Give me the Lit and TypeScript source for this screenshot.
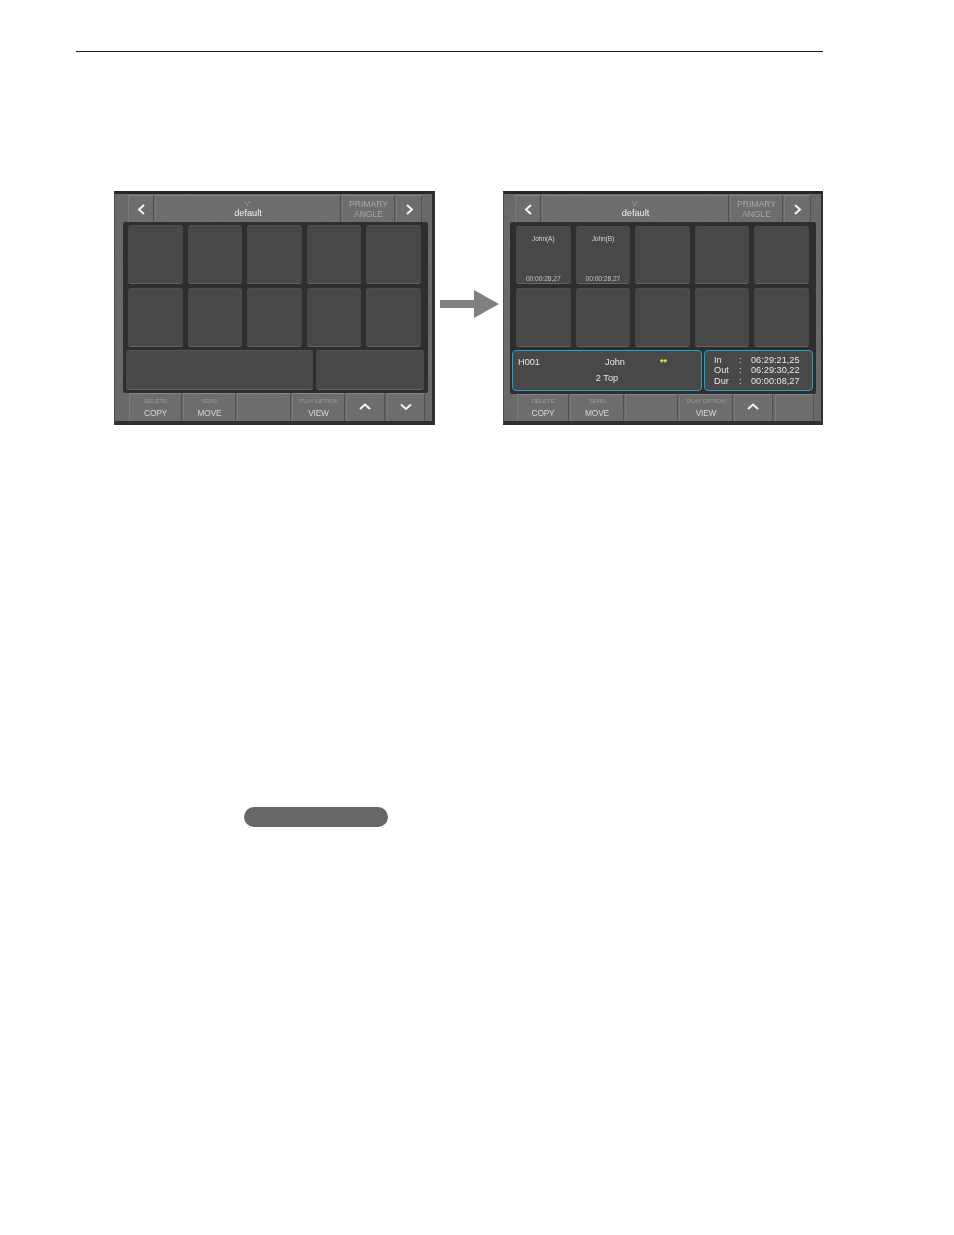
import { LitElement, html, css, svg, unsafeCSS } from "lit";
import { customElement, property } from "lit/decorators.js";

const NOISE = `url("data:image/svg+xml,%3Csvg xmlns='http://www.w3.org/2000/svg' width='160' height='160'%3E%3Cfilter id='n'%3E%3CfeTurbulence type='fractalNoise' baseFrequency='.8' numOctaves='2' stitchTiles='stitch'/%3E%3CfeColorMatrix values='0 0 0 0 .55 0 0 0 0 .55 0 0 0 0 .55 0 0 0 1.2 -.45'/%3E%3C/filter%3E%3Crect width='160' height='160' filter='url(%23n)' opacity='.22'/%3E%3C/svg%3E")`;

const chevron = (dir: "left" | "right" | "up" | "down") => {
  const pts = {
    left: "7,1 2,5.5 7,10",
    right: "2,1 7,5.5 2,10",
    up: "1,6 6,1.5 11,6",
    down: "1,1.5 6,6 11,1.5",
  }[dir];
  const horiz = dir === "left" || dir === "right";
  return html`<svg class="chev" width=${horiz ? 9 : 12} height=${horiz ? 11 : 8} viewBox=${horiz ? "0 0 9 11" : "0 0 12 8"}>
    ${svg`<polyline points=${pts} fill="none" stroke="#f4f4f4" stroke-width="2"/>`}
  </svg>`;
};

@customElement("switcher-panel")
class SwitcherPanel extends LitElement {
  @property({ type: Boolean, reflect: true }) filled = false;

  static styles = css`
    :host {
      display: block;
      width: 321px;
      height: 234px;
      box-sizing: border-box;
      border-top: 3px solid #262626;
      border-left: 1px solid #4a4c52;
      border-right: 3px solid #303030;
      border-bottom: 4px solid #303030;
      background-color: #666;
      background-image: ${unsafeCSS(NOISE)};
      font-family: "Liberation Sans", Arial, sans-serif;
    }
    :host([filled]) {
      width: 320px;
      border-right-width: 2px;
    }
    .top {
      display: grid;
      grid-template-columns: 26px 186px 53px 26px;
      column-gap: 1px;
      height: 27px;
      margin-top: 1px;
      padding-left: 13px;
    }
    .filled .top {
      grid-template-columns: 26px 187px 53px 27px;
      padding-left: 11px;
    }
    .btn {
      display: flex;
      flex-direction: column;
      align-items: center;
      justify-content: center;
      box-sizing: border-box;
      background: rgba(112, 112, 112, 0.6);
      border-top: 1px solid #878787;
      border-left: 1px solid #7a7a7a;
      border-right: 1px solid #505050;
      text-align: center;
      filter: blur(0.25px);
    }
    .v { font-size: 7.5px; line-height: 8px; color: #9a9a9a; }
    .def { font-size: 9.2px; line-height: 10px; color: #f0f0f0; }
    .prim { font-size: 8.6px; line-height: 10.5px; color: #a8a8a8; }
    .inner {
      display: flex;
      flex-direction: column;
      box-sizing: border-box;
      width: 305px;
      height: 171px;
      margin-left: 8px;
      padding-top: 3px;
      background: #2e2e2e;
      border-radius: 2px;
    }
    .filled .inner {
      width: 306px;
      height: 172px;
      margin-left: 6px;
      padding-top: 4px;
    }
    .grid {
      display: grid;
      grid-template-columns: repeat(5, 1fr);
      grid-template-rows: 59px 59px;
      gap: 4px 5px;
      width: 293px;
      margin-left: 5px;
    }
    .filled .grid {
      grid-template-rows: 58px 59px;
      margin-left: 6px;
    }
    .tile {
      display: flex;
      flex-direction: column;
      justify-content: space-between;
      align-items: center;
      box-sizing: border-box;
      padding: 8px 0 0;
      background: #484848;
      border-radius: 3px;
      border-top: 1px solid #4e4e4e;
      border-bottom: 1px solid #636363;
      color: #d4d4d4;
      font-size: 6.4px;
      line-height: 8px;
      filter: blur(0.2px);
    }
    .tile-name { font-size: 6.6px; letter-spacing: -0.1px; }
    .tile-time { font-size: 6.8px; color: #c0c0c0; letter-spacing: -0.1px; }
    .wide {
      display: grid;
      grid-template-columns: 187px 108px;
      column-gap: 3px;
      height: 40px;
      margin: 3px 0 0 3px;
    }
    .filled .wide {
      grid-template-columns: 190px 109px;
      column-gap: 2px;
      height: 41px;
      margin-left: 2px;
    }
    .box {
      box-sizing: border-box;
      background: #484848;
      border-radius: 3px;
      border-top: 1px solid #555;
      border-bottom: 1px solid #636363;
    }
    .filled .box {
      border: 1.5px solid #1ea5d6;
      border-radius: 4px;
      color: #e6e6e6;
      font-size: 9.2px;
      filter: blur(0.2px);
    }
    .clip {
      display: grid;
      grid-template-columns: 77px 40px 1fr;
      grid-template-rows: 16px 16px;
      padding: 3px 0 0 5px;
      line-height: 16px;
    }
    .clip .mid { text-align: center; }
    .clip .stars {
      padding-left: 25px;
      color: #f5f02a;
      font-size: 9px;
      font-weight: bold;
    }
    .clip .sub { grid-column: 1 / -1; text-align: center; padding-right: 5px; }
    .tc {
      display: grid;
      grid-template-columns: 25px 12px 1fr;
      grid-auto-rows: 10.4px;
      padding: 4px 0 0 9px;
      line-height: 10.4px;
    }
    .bottom {
      display: grid;
      grid-template-columns: 53px 53px 54px 53px 39px 39px;
      column-gap: 1px;
      height: 28px;
      padding-left: 14px;
    }
    .filled .bottom {
      grid-template-columns: 52px 54px 53px 54px 39px 40px;
      height: 27px;
      padding-left: 13px;
    }
    .bottom .btn:nth-child(6) { margin-left: 1px; }
    .cap { font-size: 6px; line-height: 7px; color: #9a9a9a; letter-spacing: -0.1px; margin-bottom: 4px; }
    .lab { font-size: 8.4px; line-height: 9px; color: #d6d6d6; letter-spacing: -0.2px; }
    .chev { display: block; }
    .bottom .chev { margin: -2px 1px 0 0; }
  `;

  private bottomBtn(cap: string, lab: string) {
    return html`<div class="btn">
      ${cap || lab ? html`<div class="cap">${cap}</div><div class="lab">${lab}</div>` : ""}
    </div>`;
  }

  render() {
    const f = this.filled;
    const tiles = Array.from({ length: 10 }, (_, i) => {
      if (f && i < 2) {
        return html`<div class="tile">
          <div class="tile-name">John(${i === 0 ? "A" : "B"})</div>
          <div class="tile-time">00:00:28,27</div>
        </div>`;
      }
      return html`<div class="tile"></div>`;
    });
    return html`<div class=${f ? "filled" : ""}>
      <div class="top">
        <div class="btn">${chevron("left")}</div>
        <div class="btn"><div class="v">V:</div><div class="def">default</div></div>
        <div class="btn"><div class="prim">PRIMARY</div><div class="prim">ANGLE</div></div>
        <div class="btn">${chevron("right")}</div>
      </div>
      <div class="inner">
        <div class="grid">${tiles}</div>
        <div class="wide">
          ${f
            ? html`<div class="box clip">
                  <div>H001</div>
                  <div class="mid">John</div>
                  <div class="stars">**</div>
                  <div class="sub">2 Top</div>
                </div>
                <div class="box tc">
                  <div>In</div><div>:</div><div>06:29:21,25</div>
                  <div>Out</div><div>:</div><div>06:29:30,22</div>
                  <div>Dur</div><div>:</div><div>00:00:08,27</div>
                </div>`
            : html`<div class="box"></div><div class="box"></div>`}
        </div>
      </div>
      <div class="bottom">
        ${this.bottomBtn("DELETE", "COPY")}
        ${this.bottomBtn("SEND", "MOVE")}
        ${this.bottomBtn("", "")}
        ${this.bottomBtn("PLAY OPTION", "VIEW")}
        <div class="btn">${chevron("up")}</div>
        <div class="btn">${f ? "" : chevron("down")}</div>
      </div>
    </div>`;
  }
}

@customElement("app-root")
class AppRoot extends LitElement {
  static styles = css`
    :host {
      display: block;
      width: 954px;
      height: 1235px;
      background: #fff;
      overflow: hidden;
    }
    .rule {
      width: 747px;
      height: 1px;
      margin: 51px 0 0 76px;
      background: #1a1a1a;
    }
    .figure {
      display: flex;
      align-items: flex-start;
      margin: 139px 0 0 114px;
    }
    .arrow {
      display: block;
      width: 59px;
      height: 28px;
      margin: 99px 4px 0 5px;
    }
    .pill {
      width: 144px;
      height: 20px;
      margin: 382px 0 0 244px;
      border-radius: 10px;
      background: #666;
    }
  `;

  render() {
    return html`
      <div class="rule"></div>
      <div class="figure">
        <switcher-panel></switcher-panel>
        <svg class="arrow" viewBox="0 0 59 28">
          <polygon points="0,10 34,10 34,0 59,14 34,28 34,18 0,18" fill="#808080" />
        </svg>
        <switcher-panel filled></switcher-panel>
      </div>
      <div class="pill"></div>
    `;
  }
}
